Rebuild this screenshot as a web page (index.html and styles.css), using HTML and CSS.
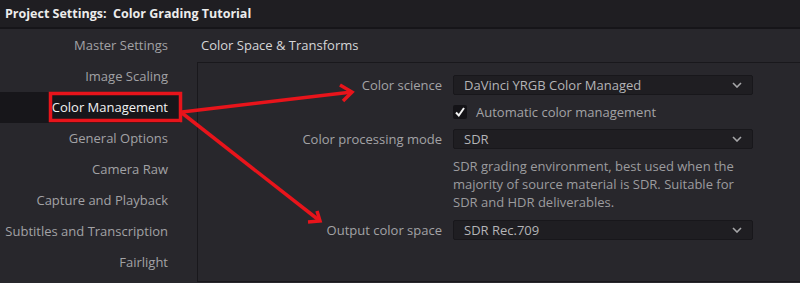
FILE: index.html
```html
<!DOCTYPE html>
<html lang="en">

<head>
    <meta charset="UTF-8">
    <meta name="viewport" content="width=device-width, initial-scale=1.0">
    <title>Project Settings</title>
    <link rel="stylesheet" href="styles.css">
</head>

<body>

    <div class="titlebar">Project Settings:&nbsp; Color Grading Tutorial</div>

    <div class="content">
        <div class="sidebar">
            <div class="nav-item">Master Settings</div>
            <div class="nav-item">Image Scaling</div>
            <div class="nav-item active">Color Management</div>
            <div class="nav-item">General Options</div>
            <div class="nav-item">Camera Raw</div>
            <div class="nav-item">Capture and Playback</div>
            <div class="nav-item">Subtitles and Transcription</div>
            <div class="nav-item">Fairlight</div>
        </div>

        <div class="main">
            <div class="section-title">Color Space &amp; Transforms</div>
            <div class="panel">
                <div class="form">
                    <div class="label">Color science</div>
                    <div class="select">
                        <span>DaVinci YRGB Color Managed</span>
                        <svg class="chevron" width="10" height="6" viewBox="0 0 10 6"><path d="M1 1 L5 5 L9 1" /></svg>
                    </div>

                    <div></div>
                    <div class="check-row">
                        <span class="checkbox">
                            <svg width="12" height="12" viewBox="0 0 12 12"><path d="M2 6.5 L4.8 9.5 L10 2" /></svg>
                        </span>
                        <span>Automatic color management</span>
                    </div>

                    <div class="label">Color processing mode</div>
                    <div class="select">
                        <span>SDR</span>
                        <svg class="chevron" width="10" height="6" viewBox="0 0 10 6"><path d="M1 1 L5 5 L9 1" /></svg>
                    </div>

                    <div></div>
                    <div class="desc">SDR grading environment, best used when the majority of source material is SDR. Suitable for SDR and HDR deliverables.</div>

                    <div class="label">Output color space</div>
                    <div class="select">
                        <span>SDR Rec.709</span>
                        <svg class="chevron" width="10" height="6" viewBox="0 0 10 6"><path d="M1 1 L5 5 L9 1" /></svg>
                    </div>
                </div>
            </div>
        </div>
    </div>

    <!-- red annotation drawn on top of the screenshot -->
    <svg class="annotation" width="800" height="283" viewBox="0 0 800 283">
        <rect x="50.5" y="93.5" width="130" height="27" />
        <path d="M182 112 L352 92" />
        <path d="M340 85 L352 92 L343 101" />
        <path d="M182 113 L320 221" />
        <path d="M317 211 L320 221 L308 222" />
    </svg>

</body>

</html>
```

FILE: styles.css
```css
body{
    margin: 0;
    width: 800px;
    height: 283px;
    overflow: hidden;
    background-color: #28272c;
    font-family: "Open Sans", "Noto Sans", sans-serif;
    font-size: 13px;
    position: relative;
}

.titlebar{
    height: 27px;
    line-height: 27px;
    padding-left: 5px;
    background-color: #1f1e22;
    border-bottom: 2px solid #161519;
    color: #ececec;
    font-weight: bold;
    font-size: 12.5px;
}

.content{
    display: flex;
    padding-top: 1px;
}

.sidebar{
    width: 180px;
    flex-shrink: 0;
}

.nav-item{
    height: 31px;
    line-height: 31px;
    text-align: right;
    padding-right: 12px;
    color: #a2a2a5;
}

.nav-item.active{
    background-color: #17161a;
    color: #f2f2f2;
}

.main{
    flex: 1;
    padding-left: 17px;
}

.section-title{
    height: 32px;
    line-height: 31px;
    padding-left: 4px;
    color: #d6d6d8;
}

.panel{
    height: 218px;
    border-top: 1px solid #19181c;
    border-left: 1px solid #19181c;
    border-bottom: 1px solid #19181c;
    background-color: #28272c;
}

.form{
    display: grid;
    grid-template-columns: 244px 300px;
    column-gap: 11px;
    row-gap: 8px;
    padding-top: 12px;
    align-items: center;
}

.label{
    text-align: right;
    color: #a3a3a6;
}

.select{
    height: 18px;
    border: 1px solid #18171b;
    border-radius: 2px;
    background-color: #1f1e22;
    display: flex;
    align-items: center;
    justify-content: space-between;
    padding: 0 10px 0 10px;
    color: #b4b4b7;
}

.chevron path{
    fill: none;
    stroke: #a6a6a8;
    stroke-width: 1.6;
}

.check-row{
    height: 18px;
    display: flex;
    align-items: center;
    gap: 9px;
    color: #a3a3a6;
}

.checkbox{
    width: 14px;
    height: 14px;
    background-color: #141317;
    border-radius: 2px;
    display: flex;
    align-items: center;
    justify-content: center;
}

.checkbox path{
    fill: none;
    stroke: #f4f4f4;
    stroke-width: 2;
}

.desc{
    line-height: 18px;
    color: #9c9c9f;
    padding-bottom: 1px;
}

.annotation{
    position: absolute;
    top: 0;
    left: 0;
    pointer-events: none;
}

.annotation rect,
.annotation path{
    fill: none;
    stroke: #e8141b;
    stroke-width: 3.5;
    stroke-linejoin: miter;
}
```
